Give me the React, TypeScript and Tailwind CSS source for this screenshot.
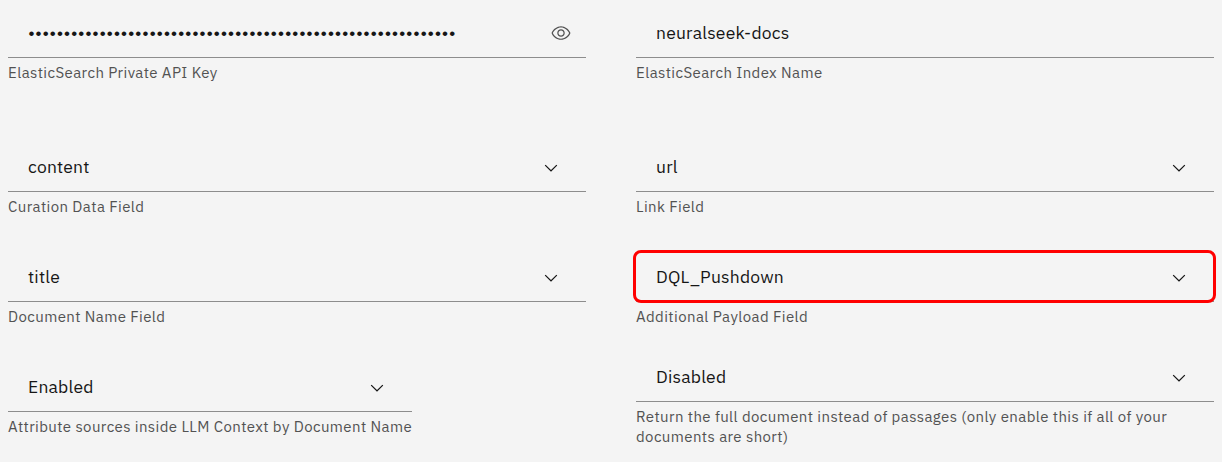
import React from "react";
import clsx from "clsx";

function EyeIcon() {
  return (
    <svg viewBox="0 0 16 16" className="size-5 shrink-0 fill-[#525252]" aria-hidden="true">
      <path d="M15.5,7.8C14.3,4.7,11.3,2.6,8,2.5C4.7,2.6,1.7,4.7,0.5,7.8c0,0.1,0,0.2,0,0.3c1.2,3.1,4.1,5.2,7.5,5.3c3.3-0.1,6.3-2.2,7.5-5.3C15.5,8.1,15.5,7.9,15.5,7.8z M8,12.5c-2.7,0-5.4-2-6.5-4.5c1-2.5,3.8-4.5,6.5-4.5s5.4,2,6.5,4.5C13.4,10.5,10.6,12.5,8,12.5z" />
      <path d="M8,5C6.3,5,5,6.3,5,8s1.3,3,3,3s3-1.3,3-3S9.7,5,8,5z M8,10c-1.1,0-2-0.9-2-2s0.9-2,2-2s2,0.9,2,2S9.1,10,8,10z" />
    </svg>
  );
}

function ChevronIcon() {
  return (
    <svg viewBox="0 0 16 16" className="mt-0.5 mr-2.5 size-5 shrink-0 fill-[#161616]" aria-hidden="true">
      <path d="M8 11L3 6 3.7 5.3 8 9.6 12.3 5.3 13 6z" />
    </svg>
  );
}

type FieldProps = {
  value: string;
  valueClass?: string;
  helper: React.ReactNode;
  icon?: React.ReactNode;
  className?: string;
  highlighted?: boolean;
};

function Field({ value, valueClass, helper, icon, className, highlighted }: FieldProps) {
  return (
    <div className={className}>
      <div className="relative flex h-[50px] items-center justify-between border-b border-[#8d8d8d] pr-[15px] pl-5">
        <span className={clsx("pt-0.5 whitespace-nowrap text-[#161616]", valueClass ?? "text-[17.5px] tracking-[0.2px]")}>
          {value}
        </span>
        {icon}
        {highlighted && (
          <div className="pointer-events-none absolute -top-0.5 -right-0.5 -bottom-0.5 -left-[3px] rounded-lg border-3 border-[#ff0000]" />
        )}
      </div>
      <p className="mt-[5px] text-[15px] leading-5 tracking-[0.4px] whitespace-nowrap text-[#525252]">{helper}</p>
    </div>
  );
}

export default function App() {
  return (
    <main className="flex h-[462px] gap-[50px] overflow-hidden bg-[#f4f4f4] px-2 pt-2 font-['IBM_Plex_Sans',Roboto,sans-serif]">
      <section className="w-[578px]">
        <Field
          value={"•".repeat(60)}
          valueClass="pl-[0.4px] font-['Liberation_Sans'] text-[17px] tracking-[1.18px]"
          helper="ElasticSearch Private API Key"
          icon={<EyeIcon />}
        />
        <Field className="mt-[59px]" value="content" helper="Curation Data Field" icon={<ChevronIcon />} />
        <Field className="mt-[35px]" value="title" helper="Document Name Field" icon={<ChevronIcon />} />
        <Field
          className="mt-[35px] w-[404px]"
          value="Enabled"
          helper="Attribute sources inside LLM Context by Document Name"
          icon={<ChevronIcon />}
        />
      </section>
      <section className="w-[578px]">
        <Field value="neuralseek-docs" helper="ElasticSearch Index Name" />
        <Field className="mt-[59px]" value="url" helper="Link Field" icon={<ChevronIcon />} />
        <Field
          className="mt-[35px]"
          value="DQL_Pushdown"
          helper="Additional Payload Field"
          icon={<ChevronIcon />}
          highlighted
        />
        <Field
          className="mt-[25px]"
          value="Disabled"
          helper={
            <>
              Return the full document instead of passages (only enable this if all of your
              <br />
              documents are short)
            </>
          }
          icon={<ChevronIcon />}
        />
      </section>
    </main>
  );
}
